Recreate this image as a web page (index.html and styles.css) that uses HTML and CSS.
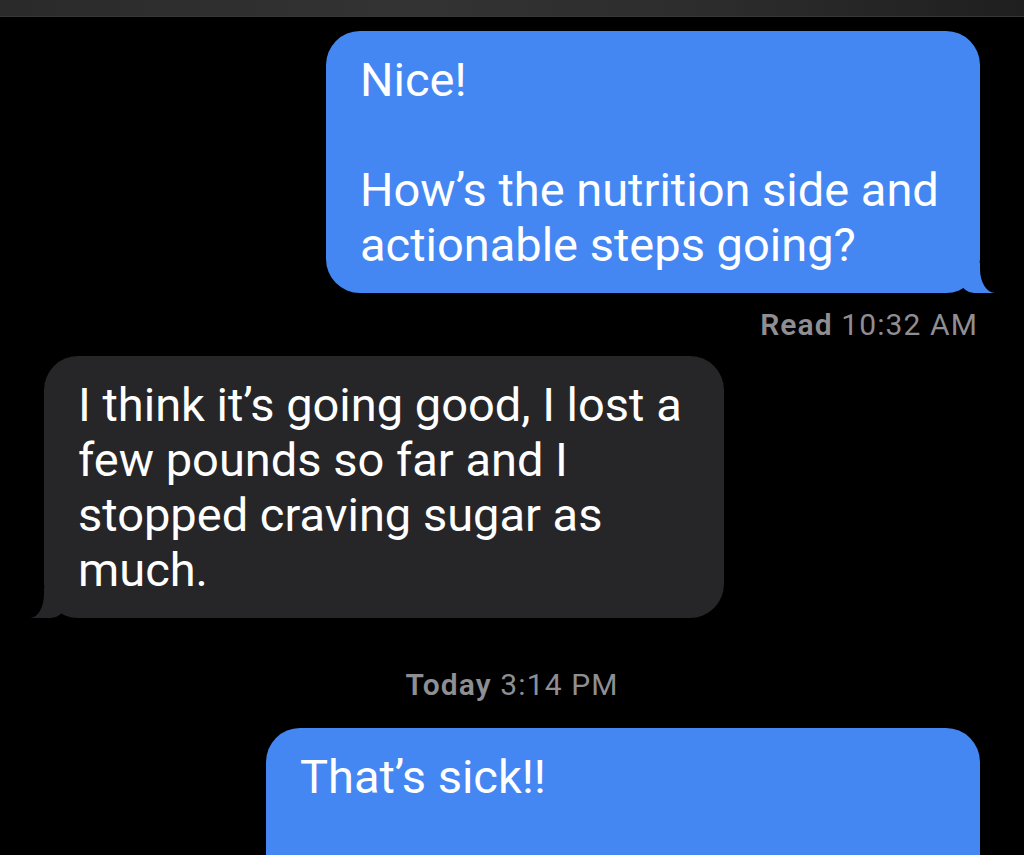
FILE: index.html
```html
<!DOCTYPE html>
<html lang="en">
<head>
    <meta charset="UTF-8">
    <meta name="viewport" content="width=device-width, initial-scale=1.0">
    <title>Messages</title>
    <link rel="stylesheet" href="styles.css">
</head>
<body>
    <div class="top-bar"></div>
    <div class="thread">
        <div class="bubble sent msg-question">Nice!<br><br>How’s the nutrition side and actionable steps going?</div>
        <div class="receipt"><b>Read</b> 10:32 AM</div>

        <div class="bubble received msg-reply">I think it’s going good, I lost a few pounds so far and I stopped craving sugar as much.</div>

        <div class="timestamp"><b>Today</b> 3:14 PM</div>

        <div class="bubble sent msg-last">That’s sick!!<br><br><br></div>
    </div>
</body>
</html>
```

FILE: styles.css
```css
body, html {
    margin: 0;
    padding: 0;
    background-color: #000;
    font-family: Roboto, "Liberation Sans", sans-serif;
    overflow: hidden;
}
.top-bar {
    height: 16px;
    background: linear-gradient(to right, #2a2a2a, #333 40%, #2c2c2c 70%, #1f1f1f);
    border-bottom: 1px solid #383838;
}
.thread {
    display: flex;
    flex-direction: column;
    padding: 14px 44px 0 44px;
}
.bubble {
    position: relative;
    box-sizing: border-box;
    padding: 21px 34px;
    border-radius: 34px;
    color: #fff;
    font-size: 47px;
    line-height: 55px;
}
.sent {
    align-self: flex-end;
    background-color: #4487f3;
}
.received {
    align-self: flex-start;
    margin-top: 15px;
    background-color: #262628;
}
.msg-question {
    width: 654px;
}
.msg-reply {
    width: 680px;
}
.msg-last {
    width: 714px;
    margin-top: 27px;
}
/* tails */
.sent::before, .received::before {
    content: "";
    position: absolute;
    bottom: 0;
    width: 33px;
    height: 30px;
}
.sent::after, .received::after {
    content: "";
    position: absolute;
    bottom: 0;
    width: 40px;
    height: 30px;
    background: #000;
}
.sent::before {
    right: -15px;
    background-color: #4487f3;
    border-bottom-left-radius: 12px 10px;
}
.sent::after {
    right: -40px;
    border-bottom-left-radius: 15px 24px;
}
.received::before {
    left: -14px;
    background-color: #262628;
    border-bottom-right-radius: 12px 10px;
}
.received::after {
    left: -40px;
    border-bottom-right-radius: 14px 24px;
}
.msg-last::before, .msg-last::after {
    display: none;
}
.receipt, .timestamp {
    color: #8e8e93;
    font-size: 30px;
    line-height: 32px;
    letter-spacing: 1.1px;
}
.receipt {
    align-self: flex-end;
    margin-top: 16px;
    margin-right: 2px;
}
.timestamp {
    align-self: center;
    margin-top: 51px;
}
.receipt b, .timestamp b {
    font-weight: 600;
}
```
